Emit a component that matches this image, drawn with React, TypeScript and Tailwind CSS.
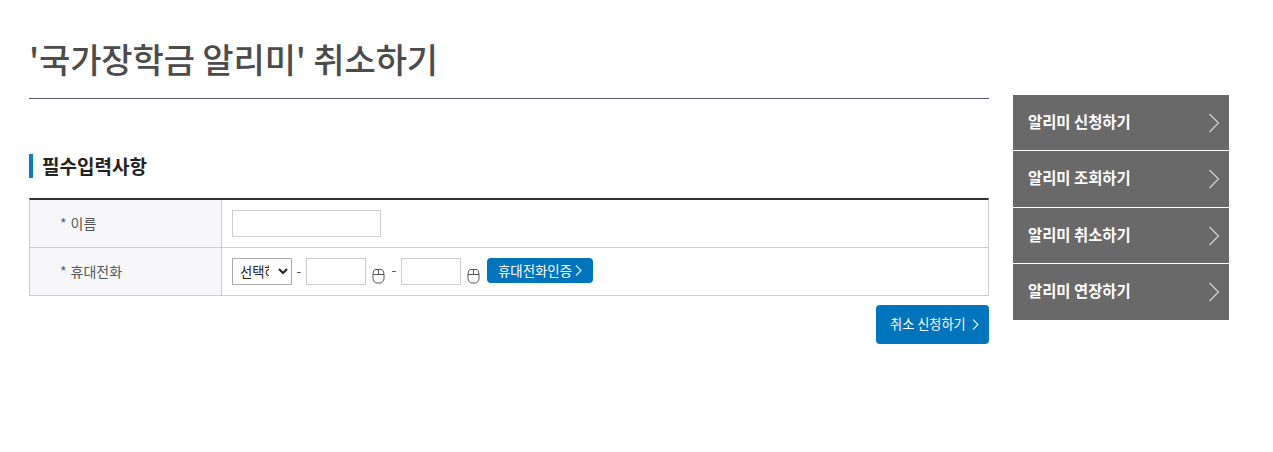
const font = "font-['Noto_Sans_CJK_KR','Noto_Sans',sans-serif]";

function MouseIcon() {
  return (
    <svg width="13" height="15" viewBox="0 0 13 15" fill="none" stroke="#555" strokeWidth="1" className="ml-[6px] mt-[11px] shrink-0">
      <path d="M4 0.500h5c1.500 0 2.300 1 2.600 2.500l.4 2.500v4C12 12 10 14 8 14H5c-2 0-4-2-4-4.500v-4L1.400 3C1.700 1.500 2.500 0.500 4 0.500z" />
      <path d="M1 5.500h11M6.500 1v4.500" />
    </svg>
  );
}

function SmallChevron() {
  return (
    <svg width="7" height="11" viewBox="0 0 7 11" fill="none" stroke="#e4eef6" strokeWidth="1.100">
      <path d="M1 0.500l5 5-5 5" />
    </svg>
  );
}

function Sidebar() {
  const items = [
    { label: "알리미 신청하기", h: "h-[55px]" },
    { label: "알리미 조회하기", h: "h-[56px]" },
    { label: "알리미 취소하기", h: "h-[55px]" },
    { label: "알리미 연장하기", h: "h-[56px]" },
  ];
  return (
    <ul className="w-[216px] mt-[95px] ml-[24px] flex flex-col gap-px shrink-0">
      {items.map((item) => (
        <li key={item.label} className={`${item.h} bg-[#696969] flex items-center justify-between pl-[15px] pr-[9px] text-white text-[15.400px] font-bold`}>
          <span className="-mt-[2px]">{item.label}</span>
          <svg width="12" height="20" viewBox="0 0 12 20" fill="none" stroke="#d8d8d8" strokeWidth="1.100">
            <path d="M1.500 1l9 9-9 9" />
          </svg>
        </li>
      ))}
    </ul>
  );
}

export default function App() {
  return (
    <div className={`${font} flex w-[1273px] h-[452px] pl-[29px] bg-white overflow-hidden`}>
      <div className="w-[960px] shrink-0">
        <h1 className="h-[99px] pt-[36px] border-b border-[#5c5870] text-[34px] leading-[46px] font-medium text-[#4c4c4c] tracking-[-0.120px]">
          '국가장학금 알리미' 취소하기
        </h1>
        <h2 className="mt-[55px] h-[24px] border-l-[4px] border-[#0b7cc0] pl-[9px] text-[19px] leading-[23px] font-bold text-[#222]">
          필수입력사항
        </h2>
        <div className="mt-[20px] border-t-2 border-[#333] border-x border-b border-x-[#ccc] border-b-[#ccc] text-[14px]">
          <div className="flex h-[48px] border-b border-[#ccc]">
            <div className="w-[192px] border-r border-[#ccc] bg-[#f7f7f9] flex items-center pl-[30px] text-[#555]">
              <span className="text-[#3a5bb0] mr-[4px]">*</span>이름
            </div>
            <div className="pl-[10px] pt-[10px]">
              <input className="block w-[149px] h-[27px] border border-[#ccc] bg-white" />
            </div>
          </div>
          <div className="flex h-[47px]">
            <div className="w-[192px] border-r border-[#ccc] bg-[#f7f7f9] flex items-center pl-[30px] text-[#555]">
              <span className="text-[#3a5bb0] mr-[4px]">*</span>휴대전화
            </div>
            <div className="pl-[10px] pt-[10px] flex items-start">
              <select className="w-[60px] h-[27px] border border-[#a9a9b0] bg-white text-[13.330px] text-[#222] pl-[3px] pr-[6px] appearance-auto">
                <option>선택하세요</option>
              </select>
              <span className="w-[14px] text-center text-[#555] leading-[24px]">-</span>
              <input className="block w-[60px] h-[27px] border border-[#ccc] bg-white" />
              <MouseIcon />
              <span className="w-[16px] pl-[2px] text-center text-[#555] leading-[22px]">-</span>
              <input className="block w-[60px] h-[27px] border border-[#ccc] bg-white" />
              <MouseIcon />
              <button className="ml-[7px] w-[106px] h-[25px] rounded-[4px] bg-[#0074bc] text-white text-[13.400px] leading-[23px] flex items-start pt-px justify-center gap-[3px]">
                휴대전화인증
                <span className="mt-[6px]"><SmallChevron /></span>
              </button>
            </div>
          </div>
        </div>
        <div className="mt-[9px] flex justify-end">
          <button className="w-[113px] h-[39px] rounded-[4px] bg-[#0074bc] text-white text-[13.200px] flex items-center justify-start pl-[14px] gap-[6px]">
            <span className="-mt-[2px]">취소 신청하기</span>
            <SmallChevron />
          </button>
        </div>
      </div>
      <Sidebar />
    </div>
  );
}
